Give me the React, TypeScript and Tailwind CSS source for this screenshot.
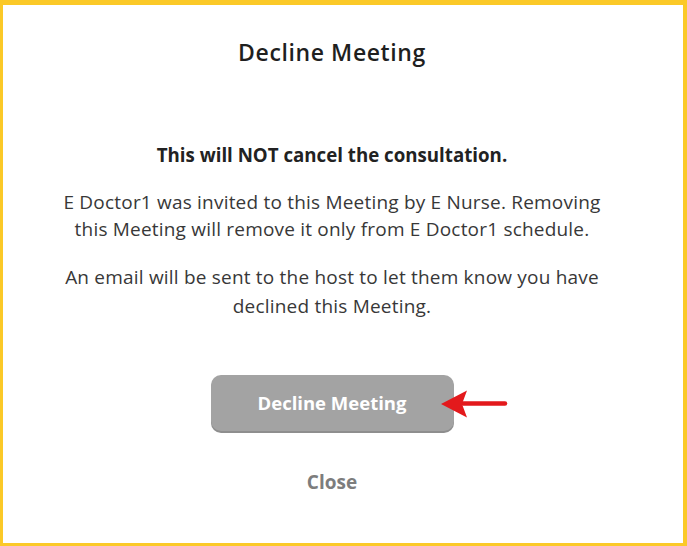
import React from 'react';

function Arrow() {
  return (
    <svg width="70" height="30" viewBox="0 0 70 30" className="absolute left-[230px] top-[14px]">
      <path d="M22 14.5 H64" stroke="#e3191c" strokeWidth="4.5" strokeLinecap="round" />
      <path d="M0 15 L26 1.5 L21 15 L26 28.5 Z" fill="#e3191c" />
    </svg>
  );
}

export default function App() {
  return (
    <div
      className="w-[687px] h-[546px] bg-[#fbc928] pt-[5px] pl-[3px] pr-[4px] pb-[3px]"
      style={{ fontFamily: '"Open Sans", "Noto Sans", sans-serif' }}
    >
      <div className="w-full h-full bg-white flex flex-col items-center pr-[22px] text-center">
        <h1 className="mt-[32px] text-[23px] leading-[30px] tracking-[0.6px] font-semibold text-[#1f1f1f]">
          Decline Meeting
        </h1>
        <p className="mt-[76px] text-[18.7px] leading-[24px] font-bold text-[#222]">
          This will NOT cancel the consultation.
        </p>
        <p className="mt-[22px] text-[19px] leading-[27px] tracking-[0.2px] text-[#383838]">
          E Doctor1 was invited to this Meeting by E Nurse. Removing
          <br />
          this Meeting will remove it only from E Doctor1 schedule.
        </p>
        <p className="mt-[20px] text-[19px] leading-[29px] tracking-[0.2px] text-[#383838]">
          An email will be sent to the host to let them know you have
          <br />
          declined this Meeting.
        </p>
        <div className="relative mt-[54px]">
          <button className="w-[243px] h-[56px] rounded-[10px] bg-[#a3a3a3] shadow-[0_2px_0_#8e8e8e] text-white text-[18.5px] font-bold">
            Decline Meeting
          </button>
          <Arrow />
        </div>
        <button className="mt-[38px] text-[19px] leading-[26px] font-bold text-[#7d7d7d]">Close</button>
      </div>
    </div>
  );
}
